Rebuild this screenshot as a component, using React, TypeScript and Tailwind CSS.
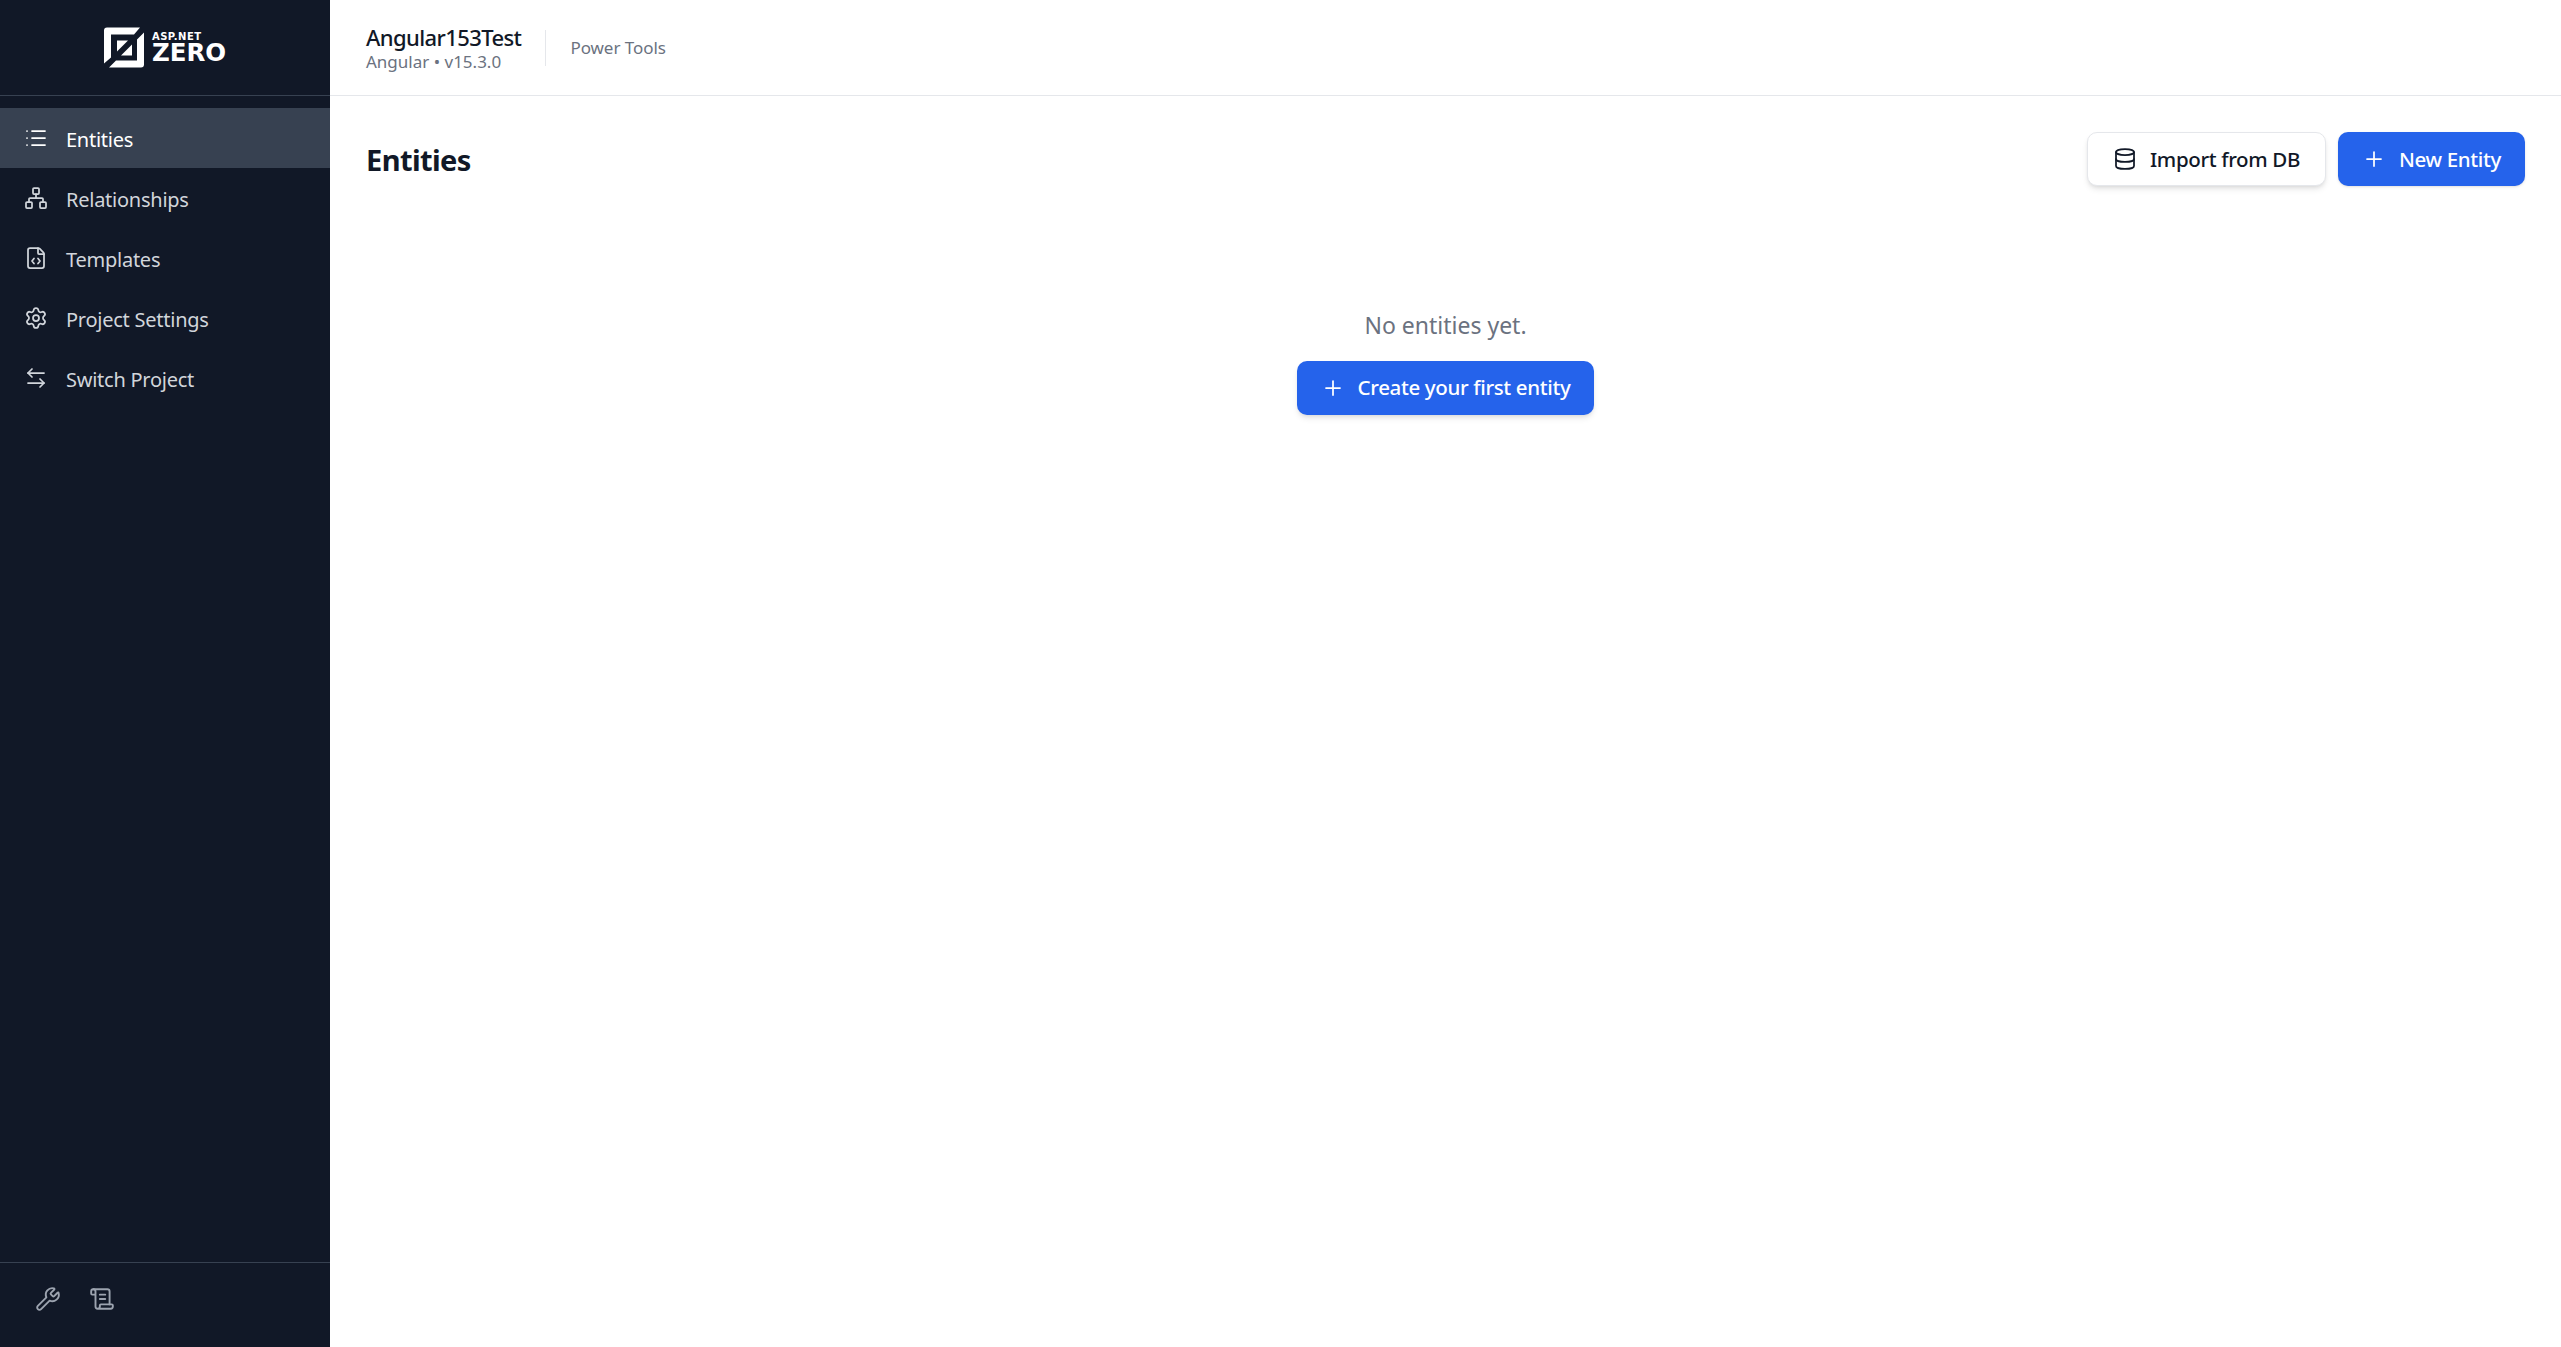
import { List, Network, FileCode, Settings, ArrowLeftRight, Wrench, ScrollText, Database, Plus } from "lucide-react";

const items = [
  { label: "Entities", icon: List, active: true },
  { label: "Relationships", icon: Network },
  { label: "Templates", icon: FileCode },
  { label: "Project Settings", icon: Settings },
  { label: "Switch Project", icon: ArrowLeftRight },
];

function Logo() {
  return (
    <div className="flex items-center gap-[8px]">
      <svg width="40" height="41" viewBox="0 0 40 40" fill="none">
        <path d="M3 0H36L30 7H7V30L0 36V3Q0 0 3 0Z" fill="#fff" />
        <path d="M40 5V37Q40 40 37 40H5L12 33H33V12Z" fill="#fff" />
        <path d="M13 13H24L13 24Z" fill="#fff" />
        <path d="M28 17V28H17Z" fill="#fff" />
      </svg>
      <div className="flex flex-col font-['DejaVu_Sans',sans-serif] font-bold text-white leading-none">
        <span className="text-[10px] tracking-[0.5px] leading-[11px]">ASP.NET</span>
        <span className="text-[24.5px] leading-[22px]">ZERO</span>
      </div>
    </div>
  );
}

export default function App() {
  return (
    <div className="flex h-screen w-full overflow-hidden bg-white font-['Noto_Sans',sans-serif]">
      <aside className="flex w-[330px] shrink-0 flex-col bg-[#111827]">
        <div className="flex h-[96px] items-center justify-center border-b border-[#374151]">
          <Logo />
        </div>
        <nav className="flex flex-1 flex-col pt-[12px]">
          {items.map(({ label, icon: Icon, active }) => (
            <div
              key={label}
              className={`flex h-[60px] items-center gap-[18px] pl-[24px] text-[20px] tracking-[-0.25px] ${active ? "bg-[#374151] text-white" : "text-[#d1d5db]"}`}
            >
              <Icon className="size-[24px]" strokeWidth={1.75} />
              <span className="pt-[3px]">{label}</span>
            </div>
          ))}
        </nav>
        <div className="flex h-[85px] items-center gap-[28px] border-t border-[#374151] pl-[35px] pb-[12px] text-[#9ca3af]">
          <Wrench className="size-[26px]" strokeWidth={1.75} />
          <ScrollText className="size-[26px]" strokeWidth={1.75} />
        </div>
      </aside>
      <main className="flex min-w-0 flex-1 flex-col">
        <header className="flex h-[96px] items-center border-b border-[#e5e7eb] pl-[36px]">
          <div className="flex flex-col pt-[1px]">
            <span className="text-[22px] leading-[27px] font-medium tracking-[-0.6px] text-[#111827]">Angular153Test</span>
            <span className="text-[17px] leading-[22px] text-[#6b7280]">Angular • v15.3.0</span>
          </div>
          <div className="mx-[24px] h-[36px] w-px bg-[#e5e7eb]" />
          <span className="text-[17px] tracking-[-0.05px] text-[#6b7280]">Power Tools</span>
        </header>
        <div className="flex flex-1 flex-col px-[36px] pt-[37px]">
          <div className="flex items-center justify-between">
            <h1 className="text-[29px] font-bold tracking-[-0.6px] text-[#111827]">Entities</h1>
            <div className="-mt-[1px] flex gap-[12px]">
              <button className="flex h-[54px] items-center gap-[13px] rounded-[10px] border border-[#e5e7eb] bg-white px-[25px] text-[20.5px] font-medium tracking-[-0.35px] text-[#111827] shadow-md">
                <Database className="size-[24px]" strokeWidth={1.75} />
                Import from DB
              </button>
              <button className="flex h-[54px] items-center gap-[13px] rounded-[10px] bg-[#2563eb] px-[24px] text-[20.5px] font-medium tracking-[-0.35px] text-white shadow-sm">
                <Plus className="size-[24px]" strokeWidth={1.75} />
                New Entity
              </button>
            </div>
          </div>
          <div className="flex flex-col items-center pt-[122px]">
            <p className="text-[23px] text-[#6b7280]">No entities yet.</p>
            <button className="mt-[18px] flex h-[54px] items-center gap-[13px] rounded-[10px] bg-[#2563eb] px-[24px] text-[20.5px] font-medium tracking-[-0.35px] text-white shadow-md">
              <Plus className="size-[24px]" strokeWidth={1.75} />
              Create your first entity
            </button>
          </div>
        </div>
      </main>
    </div>
  );
}
